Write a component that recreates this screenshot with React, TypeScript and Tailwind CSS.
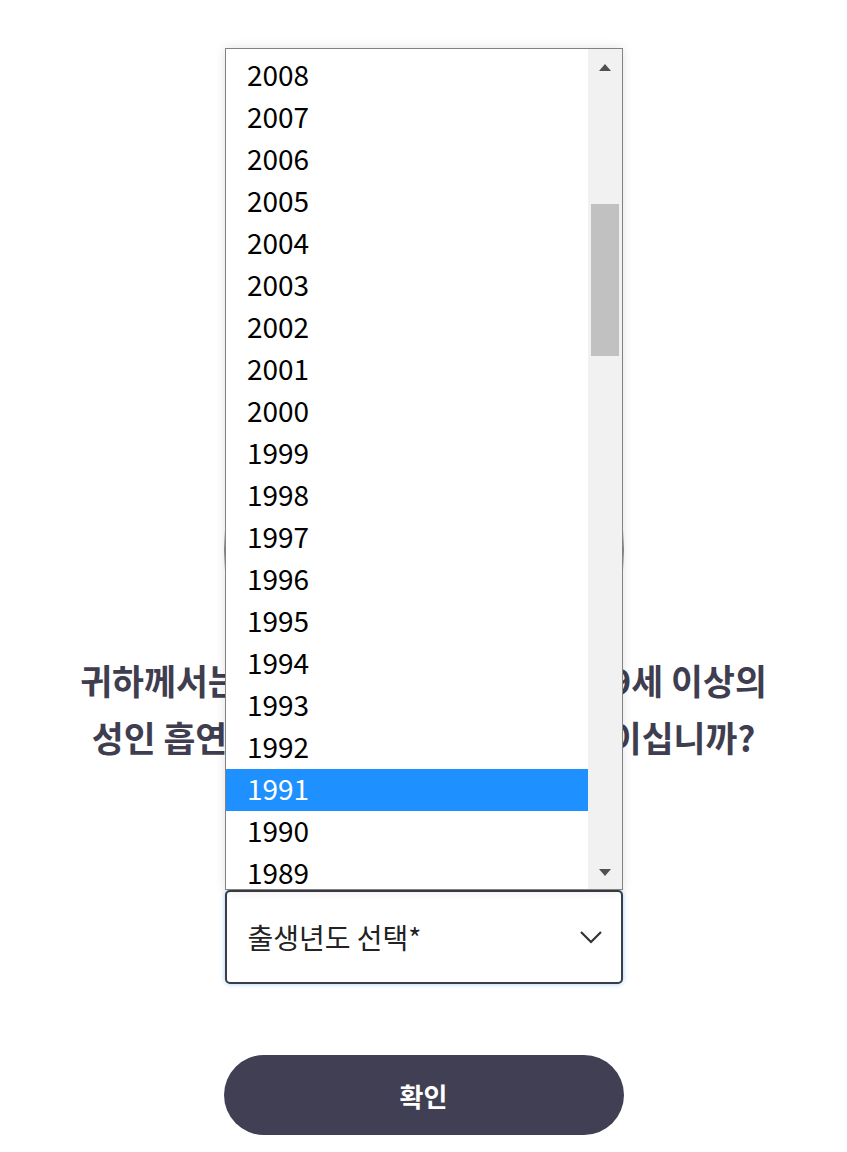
const years = Array.from({ length: 20 }, (_, i) => 2008 - i);

const YearList = () => {
  return (
    <div className="absolute left-[225px] top-[48px] z-10 flex h-[842px] w-[398px] overflow-hidden border border-[#828282] bg-white shadow-[0_0_10px_rgba(0,0,0,0.12)]">
      <ul className="flex-1 overflow-hidden pt-[6px]">
        {years.map((y) => (
          <li
            key={y}
            className={
              y === 1991
                ? "flex h-[42px] items-center bg-[#1e90ff] pb-[4px] pl-[21px] text-[28px] leading-none text-white"
                : "flex h-[42px] items-center pb-[4px] pl-[21px] text-[28px] leading-none text-black"
            }
          >
            {y}
          </li>
        ))}
      </ul>
      <div className="flex w-[34px] flex-col items-center bg-[#f1f1f1]">
        <div className="mt-[15px] h-0 w-0 border-x-[6px] border-b-[7px] border-x-transparent border-b-[#505050]" />
        <div className="mt-[133px] h-[152px] w-[28px] bg-[#c1c1c1]" />
        <div className="mt-auto mb-[13px] h-0 w-0 border-x-[6px] border-t-[7px] border-x-transparent border-t-[#505050]" />
      </div>
    </div>
  );
};

export default function App() {
  return (
    <div className="relative min-h-[1152px] bg-white font-['Noto_Sans_CJK_KR','Noto_Sans',sans-serif]">
      <div className="absolute left-[224px] top-[350px] h-[400px] w-[400px] rounded-full border border-[#888]" />
      <YearList />
      <div className="flex flex-col items-center pt-[652px]">
        <h1 className="text-center text-[34.7px] font-bold leading-[57px] text-[#3f3e50]">
          귀하께서는 대한민국에 거주하는 만 19세 이상의
          <br />
          성인 흡연자 또는 니코틴 제품 사용자이십니까?
        </h1>
        <div className="mt-[124px] flex h-[94px] w-[398px] items-center justify-between rounded-[5px] border-2 border-[#3c3c46] bg-white pl-[21px] pr-[18px] shadow-[0_0_5px_rgba(30,144,255,0.45)]">
          <span className="text-[28px] text-[#222]">출생년도 선택*</span>
          <svg width="24" height="14" viewBox="0 0 24 14" fill="none" stroke="#333" strokeWidth="2.2">
            <path d="M2 2l10 10L22 2" />
          </svg>
        </div>
        <button className="mt-[71px] h-[80px] w-[400px] rounded-full bg-[#403f53] text-[26px] font-bold text-white">
          확인
        </button>
      </div>
    </div>
  );
}
